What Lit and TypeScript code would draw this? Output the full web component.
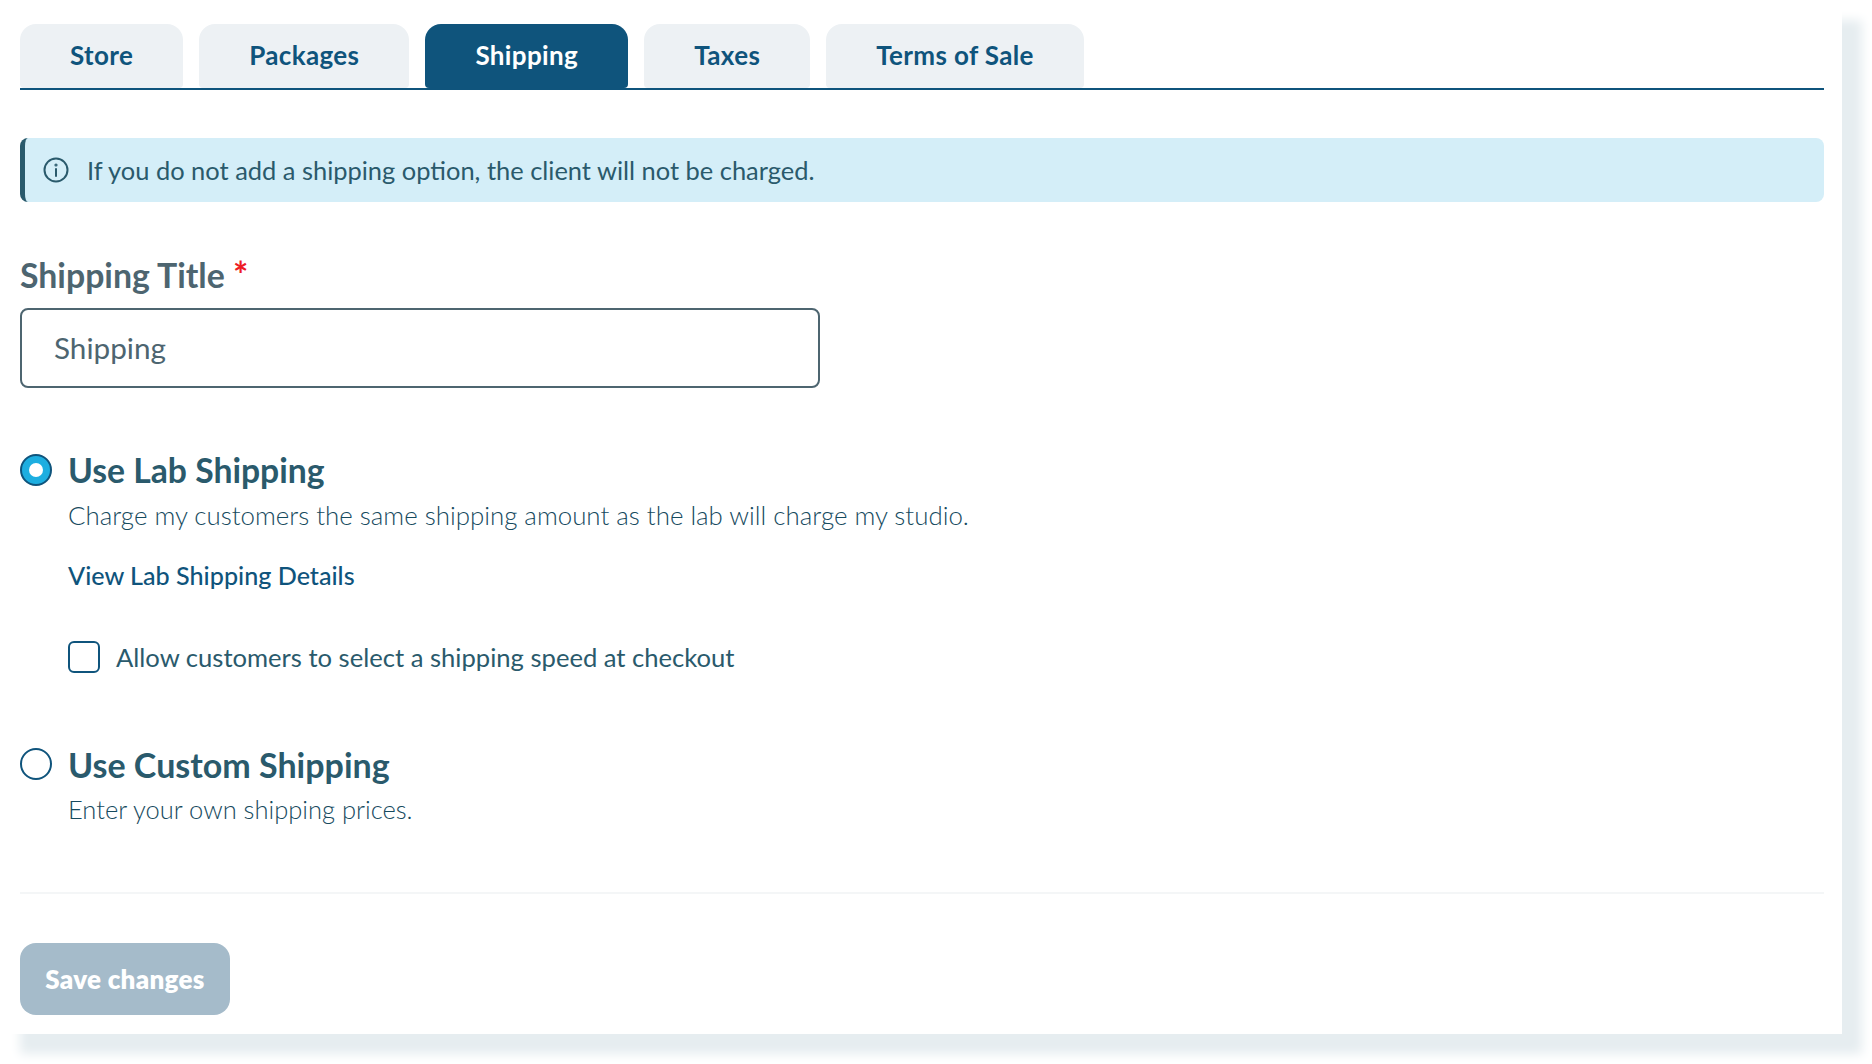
import { LitElement, html, css } from 'lit'
import { customElement } from 'lit/decorators.js'

const TABS = ['Store', 'Packages', 'Shipping', 'Taxes', 'Terms of Sale']

@customElement('app-root')
export class AppRoot extends LitElement {
  static styles = css`
    :host {
      display: block;
      width: 1872px;
      height: 1064px;
      overflow: hidden;
      background: #fff;
      font-family: Lato, "Noto Sans", sans-serif;
      color: #2a5a6c;
    }

    .panel {
      box-sizing: border-box;
      width: 1842px;
      height: 1034px;
      padding: 24px 18px 0 20px;
      background: #fff;
      box-shadow: 20px 20px 10px #e6edf0;
    }

    .tabs {
      display: flex;
      gap: 16px;
      height: 64px;
      border-bottom: 2px solid #0f547c;
    }

    .tab {
      display: flex;
      align-items: center;
      box-sizing: border-box;
      padding: 0 50px 3px;
      height: 64px;
      border-radius: 16px 16px 4px 4px;
      background: #edf1f4;
      color: #0f547c;
      font-size: 26px;
      font-weight: 700;
      letter-spacing: 0.36px;
    }

    .tab.active {
      background: #0f547c;
      color: #fff;
    }

    .alert {
      box-sizing: border-box;
      display: flex;
      align-items: center;
      gap: 18px;
      height: 64px;
      margin-top: 48px;
      padding-left: 18px;
      border-left: 5px solid #2a5a6c;
      border-radius: 8px;
      background: #d4eef8;
      font-size: 25.45px;
    }

    .field-label {
      margin-top: 55px;
      height: 36px;
      line-height: 36px;
      color: #4d6570;
      font-size: 33.8px;
      font-weight: 700;
    }

    .req {
      color: #ee1c25;
      font-size: 36px;
      line-height: 0;
    }

    .input {
      box-sizing: border-box;
      display: flex;
      align-items: center;
      width: 800px;
      height: 80px;
      margin-top: 15px;
      padding: 0 0 2px 32px;
      border: 2px solid #4d6570;
      border-radius: 8px;
      color: #4d6570;
      font-size: 29.7px;
    }

    .option {
      display: flex;
      gap: 16px;
    }

    .option.lab {
      margin-top: 66px;
    }

    .option.custom {
      margin-top: 75px;
    }

    .option-body {
      margin-top: -2px;
    }

    .custom .option-body {
      margin-top: -1px;
    }

    .radio {
      box-sizing: border-box;
      flex: none;
      width: 32px;
      height: 32px;
      border: 2px solid #0f547c;
      border-radius: 50%;
      background: #fff;
    }

    .radio.on {
      background: #1daee0;
      display: flex;
      align-items: center;
      justify-content: center;
    }

    .radio.on::after {
      content: '';
      width: 14px;
      height: 14px;
      border-radius: 50%;
      background: #fff;
    }

    .option-title {
      height: 36px;
      line-height: 36px;
      font-size: 33.7px;
      font-weight: 700;
    }

    .custom .option-title {
      font-size: 34px;
    }

    .desc {
      margin-top: 11px;
      height: 32px;
      line-height: 32px;
      color: #164a5e;
      font-size: 25.87px;
      font-weight: 300;
    }

    .custom .desc {
      margin-top: 10px;
      font-size: 25.5px;
    }

    .link {
      margin-top: 28px;
      height: 32px;
      line-height: 32px;
      color: #0f547c;
      font-size: 25.15px;
      font-weight: 500;
    }

    .check-row {
      display: flex;
      align-items: center;
      gap: 16px;
      margin-top: 50px;
      font-size: 25.6px;
    }

    .checkbox {
      box-sizing: border-box;
      width: 32px;
      height: 32px;
      border: 2px solid #0f547c;
      border-radius: 6px;
    }

    hr {
      height: 2px;
      margin: 67px 0 0;
      border: 0;
      background: #f4f6f7;
    }

    .save {
      display: flex;
      align-items: center;
      justify-content: center;
      width: 210px;
      height: 72px;
      margin-top: 49px;
      border-radius: 16px;
      background: #a5bbca;
      color: #fff;
      font-size: 26px;
      font-weight: 800;
      letter-spacing: 0.3px;
    }
  `

  render() {
    return html`
      <div class="panel">
        <div class="tabs">
          ${TABS.map(t => html`<div class="tab ${t === 'Shipping' ? 'active' : ''}">${t}</div>`)}
        </div>

        <div class="alert">
          <svg width="26" height="26" viewBox="0 0 26 26" fill="none" stroke="#2a5a6c" stroke-width="2">
            <circle cx="13" cy="13" r="11.5"></circle>
            <path d="M13 12v7" stroke-linecap="round"></path>
            <circle cx="13" cy="8" r="0.6"></circle>
          </svg>
          <span>If you do not add a shipping option, the client will not be charged.</span>
        </div>

        <div class="field-label">Shipping Title <span class="req">*</span></div>
        <div class="input">Shipping</div>

        <div class="option lab">
          <div class="radio on"></div>
          <div class="option-body">
            <div class="option-title">Use Lab Shipping</div>
            <div class="desc">Charge my customers the same shipping amount as the lab will charge my studio.</div>
            <div class="link">View Lab Shipping Details</div>
            <div class="check-row">
              <div class="checkbox"></div>
              <span>Allow customers to select a shipping speed at checkout</span>
            </div>
          </div>
        </div>

        <div class="option custom">
          <div class="radio"></div>
          <div class="option-body">
            <div class="option-title">Use Custom Shipping</div>
            <div class="desc">Enter your own shipping prices.</div>
          </div>
        </div>

        <hr />
        <div class="save">Save changes</div>
      </div>
    `
  }
}

declare global {
  interface HTMLElementTagNameMap {
    'app-root': AppRoot
  }
}
